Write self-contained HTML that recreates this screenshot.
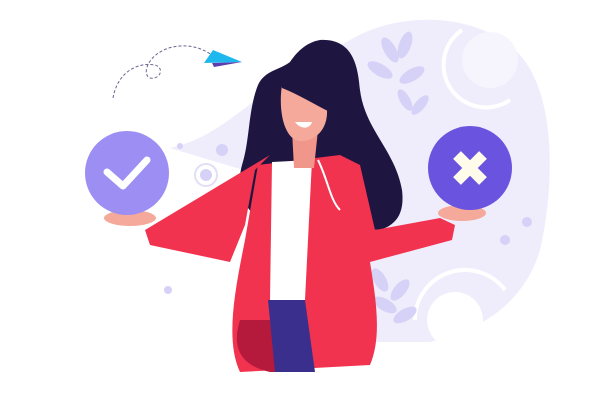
<!DOCTYPE html>
<html><head><meta charset="utf-8"><style>
html,body{margin:0;padding:0;background:#fff;width:613px;height:407px;overflow:hidden}
svg{display:block}
</style></head><body>
<svg width="613" height="407" viewBox="0 0 613 407" xmlns="http://www.w3.org/2000/svg">
<!-- background blob -->
<path d="M350 40 C400 10 480 12 520 55 C560 100 552 200 540 250 C525 300 485 330 430 342 L360 342 L330 200 L260 175 L170 148 C210 140 240 110 270 90 C300 70 320 55 350 40Z" fill="#efedfb"/>
<!-- gear arcs -->
<path d="M462 30 A35 35 0 0 0 510 100" fill="none" stroke="#fff" stroke-width="4"/>
<circle cx="490" cy="60" r="28" fill="#f6f5fd"/>
<path d="M415 320 A50 50 0 0 1 505 290" fill="none" stroke="#fff" stroke-width="4"/>
<circle cx="455" cy="320" r="28" fill="#fff"/>
<!-- leaves -->
<g fill="#d6d1f6">
<ellipse cx="390" cy="50" rx="6" ry="14" transform="rotate(-30 390 50)"/>
<ellipse cx="405" cy="45" rx="6" ry="14" transform="rotate(20 405 45)"/>
<ellipse cx="380" cy="70" rx="6" ry="14" transform="rotate(-60 380 70)"/>
<ellipse cx="412" cy="75" rx="6" ry="14" transform="rotate(60 412 75)"/>
<ellipse cx="405" cy="100" rx="5" ry="12" transform="rotate(-30 405 100)"/>
<ellipse cx="420" cy="105" rx="5" ry="12" transform="rotate(40 420 105)"/>
<ellipse cx="380" cy="280" rx="6" ry="13" transform="rotate(-30 380 280)"/>
<ellipse cx="400" cy="290" rx="6" ry="13" transform="rotate(40 400 290)"/>
<ellipse cx="385" cy="305" rx="6" ry="13" transform="rotate(-60 385 305)"/>
<ellipse cx="405" cy="315" rx="6" ry="13" transform="rotate(60 405 315)"/>
<circle cx="222" cy="150" r="6"/><circle cx="180" cy="146" r="3"/>
<circle cx="206" cy="175" r="6"/><circle cx="505" cy="240" r="5"/>
<circle cx="527" cy="222" r="5"/><circle cx="168" cy="290" r="4"/>
</g>
<circle cx="206" cy="175" r="11" fill="none" stroke="#e2def7" stroke-width="2"/>
<!-- paper plane + dashes -->
<path d="M113 98 C118 70 140 62 155 65 C165 68 160 80 150 78 C140 74 150 48 180 46 C195 45 205 50 215 57" fill="none" stroke="#6a6591" stroke-width="1" stroke-dasharray="3 2"/>
<path d="M204 63 L242 62 L213 50 Z" fill="#1fb8ee"/>
<path d="M212 63 L242 62 L214 67Z" fill="#5b3fb0"/>
<!-- hair back -->
<path d="M320 40 C355 38 358 70 360 90 C365 130 395 150 402 190 C405 215 395 225 380 230 L270 225 C245 215 235 190 242 165 C250 140 248 110 258 85 C265 70 280 70 290 62 C298 50 308 42 320 40Z" fill="#1e1540"/>
<!-- jacket / arms -->
<path d="M145 230 L150 245 L230 262 L245 225 L255 170 L270 155 Z" fill="#f2334f"/>
<path d="M340 155 L360 165 L375 230 L440 218 L455 225 L452 240 L370 262 Z" fill="#f2334f"/>
<path d="M258 165 L340 155 C355 165 362 190 365 230 C372 280 385 330 370 365 L240 372 C225 340 235 290 245 240 Z" fill="#f2334f"/>
<path d="M240 320 C232 345 238 365 270 372 L282 372 L272 320 Z" fill="#b51a3c"/>
<path d="M318 160 C328 180 330 200 340 210" fill="none" stroke="#fff" stroke-width="2"/>
<!-- shirt / pants -->
<path d="M272 162 L312 160 L305 300 L270 300 Z" fill="#fff"/>
<path d="M268 300 L305 300 L315 372 L275 372 Z" fill="#3b2f8e"/>
<!-- neck/face -->
<path d="M292 130 L318 130 L314 168 L294 168Z" fill="#f0968a"/>
<path d="M282 85 C300 80 325 90 327 110 C328 132 312 142 300 141 C284 140 278 110 282 85Z" fill="#f4a99a"/>
<path d="M278 70 C300 65 320 80 330 112 C315 105 300 95 282 88Z" fill="#1e1540"/>
<path d="M295 122 C301 130 310 129 312 122 Z" fill="#fff"/>
<!-- hands -->
<ellipse cx="130" cy="218" rx="26" ry="8" fill="#f4a99a"/>
<ellipse cx="462" cy="213" rx="24" ry="8" fill="#f4a99a"/>
<!-- check circle -->
<circle cx="127" cy="173" r="42" fill="#9d8ef4"/>
<path d="M107 172 L123 186 L147 160" fill="none" stroke="#fff" stroke-width="7" stroke-linecap="round" stroke-linejoin="round"/>
<!-- x circle -->
<circle cx="470" cy="168" r="42" fill="#6a53df"/>
<path d="M457 155 L483 181 M483 155 L457 181" stroke="#fffbea" stroke-width="11"/>
</svg>
</body></html>
